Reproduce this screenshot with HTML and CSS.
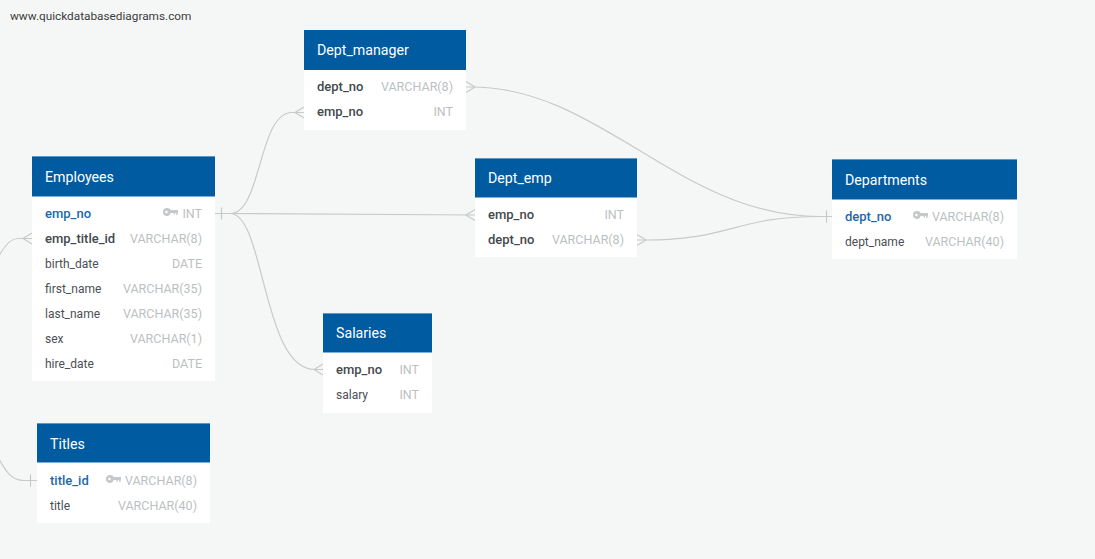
FILE: index.html
```html
<!DOCTYPE html>
<html lang="en">
<head>
<meta charset="utf-8">
<title>Diagram</title>
<link rel="stylesheet" href="styles.css">
</head>
<body>
<main class="canvas">
  <div class="site">www.quickdatabasediagrams.com</div>
  <svg class="links" width="1095" height="559" viewBox="0 0 1095 559" fill="none">
    <path d="M230 213.500C262 213.500 258 112.500 292 112.500H304"/>
    <path d="M295 112.500L304 107M295 112.500L304 118"/>
    <path d="M215 213.500H230L475 215"/>
    <path d="M466 215L475 209.500M466 215L475 220.500"/>
    <path d="M230 213.500C265 213.500 262 369.500 315 369.500H323"/>
    <path d="M314 369.500L323 364M314 369.500L323 375"/>
    <path d="M221.500 207.500V219.500"/>
    <path d="M466 87H472C600 87 680 216.500 820 216.500H832"/>
    <path d="M475 87L466 81.500M475 87L466 92.500"/>
    <path d="M637 240H646C730 240 735 216.500 820 216.500"/>
    <path d="M646 240L637 234.500M646 240L637 245.500"/>
    <path d="M826.500 210.500V222.500"/>
    <path d="M32 238.500H18C10 238.500 4 246 -2 258"/>
    <path d="M23 238.500L32 233M23 238.500L32 244"/>
    <path d="M-1 459C6 472 12 480.500 24 480.500H37"/>
    <path d="M30.500 474.500V486.500"/>
  </svg>

  <section class="table employees">
    <h2 class="table-name">Employees</h2>
    <ul class="fields">
      <li class="field key"><span class="name">emp_no</span><span class="type"><svg class="key-icon" viewBox="0 0 15 8"><path fill-rule="evenodd" d="M4 0a4 4 0 0 1 3.700 2H15V5H14.600V7H13.200V5H12V6.500H10.600V5H7.700A4 4 0 1 1 4 0zM3.400 2.700a1.300 1.300 0 1 0 0 2.600 1.300 1.300 0 0 0 0-2.600z"/></svg>INT</span></li>
      <li class="field fk"><span class="name">emp_title_id</span><span class="type">VARCHAR(8)</span></li>
      <li class="field"><span class="name">birth_date</span><span class="type">DATE</span></li>
      <li class="field"><span class="name">first_name</span><span class="type">VARCHAR(35)</span></li>
      <li class="field"><span class="name">last_name</span><span class="type">VARCHAR(35)</span></li>
      <li class="field"><span class="name">sex</span><span class="type">VARCHAR(1)</span></li>
      <li class="field"><span class="name">hire_date</span><span class="type">DATE</span></li>
    </ul>
  </section>

  <section class="table titles">
    <h2 class="table-name">Titles</h2>
    <ul class="fields">
      <li class="field key"><span class="name">title_id</span><span class="type"><svg class="key-icon" viewBox="0 0 15 8"><path fill-rule="evenodd" d="M4 0a4 4 0 0 1 3.700 2H15V5H14.600V7H13.200V5H12V6.500H10.600V5H7.700A4 4 0 1 1 4 0zM3.400 2.700a1.300 1.300 0 1 0 0 2.600 1.300 1.300 0 0 0 0-2.600z"/></svg>VARCHAR(8)</span></li>
      <li class="field"><span class="name">title</span><span class="type">VARCHAR(40)</span></li>
    </ul>
  </section>

  <section class="table manager raised">
    <h2 class="table-name">Dept_manager</h2>
    <ul class="fields">
      <li class="field fk"><span class="name">dept_no</span><span class="type">VARCHAR(8)</span></li>
      <li class="field fk"><span class="name">emp_no</span><span class="type">INT</span></li>
    </ul>
  </section>

  <section class="table dept-emp raised">
    <h2 class="table-name">Dept_emp</h2>
    <ul class="fields">
      <li class="field fk"><span class="name">emp_no</span><span class="type">INT</span></li>
      <li class="field fk"><span class="name">dept_no</span><span class="type">VARCHAR(8)</span></li>
    </ul>
  </section>

  <section class="table departments">
    <h2 class="table-name">Departments</h2>
    <ul class="fields">
      <li class="field key"><span class="name">dept_no</span><span class="type"><svg class="key-icon" viewBox="0 0 15 8"><path fill-rule="evenodd" d="M4 0a4 4 0 0 1 3.700 2H15V5H14.600V7H13.200V5H12V6.500H10.600V5H7.700A4 4 0 1 1 4 0zM3.400 2.700a1.300 1.300 0 1 0 0 2.600 1.300 1.300 0 0 0 0-2.600z"/></svg>VARCHAR(8)</span></li>
      <li class="field"><span class="name">dept_name</span><span class="type">VARCHAR(40)</span></li>
    </ul>
  </section>

  <section class="table salaries raised">
    <h2 class="table-name">Salaries</h2>
    <ul class="fields">
      <li class="field fk"><span class="name">emp_no</span><span class="type">INT</span></li>
      <li class="field"><span class="name">salary</span><span class="type">INT</span></li>
    </ul>
  </section>
</main>
</body>
</html>
```
FILE: styles.css
```css
* { box-sizing: border-box; }
html, body { margin: 0; padding: 0; }
body {
  width: 1095px;
  height: 559px;
  overflow: hidden;
  background: #f5f7f7;
  font-family: Roboto, "Liberation Sans", sans-serif;
}
.canvas { position: relative; width: 1095px; height: 559px; overflow: hidden; }
.site {
  position: absolute;
  left: 10px;
  top: 9px;
  font-size: 11.800px;
  line-height: 14px;
  color: #3c3c3c;
}
.links {
  position: absolute;
  left: 0;
  top: 0;
}
.links path { stroke: #c8caca; stroke-width: 1.2; }
.table {
  position: absolute;
  background: #fff;
  display: flex;
  flex-direction: column;
}
.employees { left: 32px; top: 156px; width: 183px; }
.titles { left: 37px; top: 423px; width: 173px; }
.manager { left: 304px; top: 30px; width: 162px; }
.dept-emp { left: 475px; top: 158px; width: 162px; }
.departments { left: 832px; top: 159px; width: 185px; }
.salaries { left: 323px; top: 313px; width: 109px; }
.table-name {
  margin: 0;
  height: 40px;
  padding: 2px 13px 0;
  display: flex;
  align-items: center;
  background: #005ba1;
  border-top: 1px solid #5c97c6;
  border-bottom: 1px solid #7fb0d6;
  color: #fff;
  font-size: 14.200px;
  font-weight: 400;
}
.employees .table-name,
.departments .table-name { height: 41px; padding-top: 0; }
.raised .table-name { padding-top: 0; }
.manager .table-name { border-top-color: #005ba1; border-bottom-color: #005ba1; }
.fields {
  list-style: none;
  margin: 0;
  padding: 5px 13px;
}
.employees .fields,
.departments .fields { padding-top: 4px; }
.raised .fields { padding: 4px 13px 6px; }
.dept-emp .fields { padding-bottom: 5px; }
.field {
  height: 25px;
  display: flex;
  align-items: center;
  justify-content: space-between;
  font-size: 12px;
  color: #4a4f54;
}
.fk .name { font-size: 13px; font-weight: 500; color: #43484d; }
.key .name { font-size: 13px; font-weight: 500; color: #1c68a8; }
.type {
  display: flex;
  align-items: center;
  font-size: 12.500px;
  color: #bcbfc2;
}
.key-icon {
  width: 15px;
  height: 8px;
  margin: 0 4px 4px 0;
  fill: #c6c9cb;
}
```
